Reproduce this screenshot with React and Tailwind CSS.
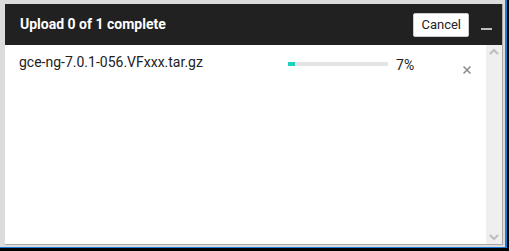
import React from 'react';

// Upload progress panel
export default function App() {
    const uploads = [{ name: 'gce-ng-7.0.1-056.VFxxx.tar.gz', pct: 7 }];

    return (
        <div className="w-[509px] h-[251px] bg-black flex flex-col overflow-hidden" style={{ fontFamily: 'Roboto, "Liberation Sans", sans-serif' }}>
            <div className="w-[507px] h-[248px] bg-[#1a7ad8] flex flex-col">
                <div className="w-[505px] h-[247px] bg-[#dcdcdc] flex flex-col pt-[4px] pl-[5px] pr-[2px] pb-[2px]">
                    <div className="flex-1 flex flex-col bg-white border-r border-b border-[#a8a8a8]">
                        {/* Header */}
                        <div className="h-[41px] bg-[#212121] flex items-center pl-[15px] pr-[10px]">
                            <span className="text-white font-bold text-[14px] flex-1">Upload 0 of 1 complete</span>
                            <button className="h-[24px] px-[7px] bg-white border border-[#ccc] rounded-[2px] text-[13px] text-[#222]">Cancel</button>
                            <span className="ml-[12px] mt-[9px] w-[11px] h-[2px] bg-[#bdbdbd]"></span>
                        </div>
                        {/* Body */}
                        <div className="flex-1 flex">
                            <div className="flex-1 flex flex-col">
                                {uploads.map(u => (
                                    <div key={u.name} className="flex items-start h-[40px] pl-[14px]">
                                        <span className="mt-[7px] text-[14px] text-[#222] w-[269px]">{u.name}</span>
                                        <div className="mt-[17px] w-[100px] h-[4px] bg-[#e4e4e4]">
                                            <div className="h-full bg-[#1fcfbf]" style={{ width: `${u.pct}%` }}></div>
                                        </div>
                                        <span className="ml-[8px] mt-[10px] text-[14px] text-[#222]">{u.pct}%</span>
                                        <svg className="ml-[49px] mt-[21px]" width="8" height="8" viewBox="0 0 8 8">
                                            <path d="M0.5 0.5 L7.5 7.5 M7.5 0.5 L0.5 7.5" stroke="#8a8a8a" strokeWidth="1.5" fill="none" />
                                        </svg>
                                    </div>
                                ))}
                            </div>
                            {/* Scrollbar */}
                            <div className="w-[16px] bg-[#efefef] flex flex-col justify-between items-center py-[3px]">
                                <svg width="10" height="8" viewBox="0 0 10 8"><path d="M1 6 L5 2 L9 6" stroke="#bdbdbd" strokeWidth="2" fill="none" /></svg>
                                <svg width="10" height="8" viewBox="0 0 10 8"><path d="M1 2 L5 6 L9 2" stroke="#bdbdbd" strokeWidth="2" fill="none" /></svg>
                            </div>
                        </div>
                    </div>
                </div>
            </div>
        </div>
    );
}
